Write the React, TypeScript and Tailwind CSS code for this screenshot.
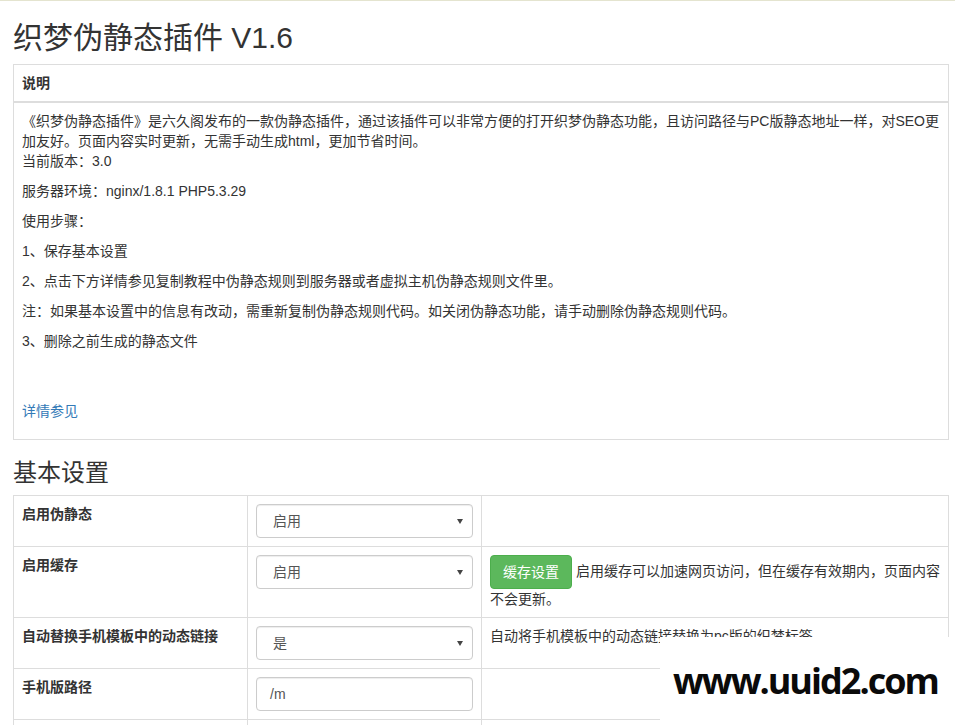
const pageFont = "[font-family:'Liberation_Sans','Noto_Sans_CJK_SC',sans-serif]";

function FakeSelect({ value }: { value: string }) {
  return (
    <div className="flex h-[34px] items-center justify-between rounded-[4px] border border-[#ccc] bg-white pl-[16px] pr-[9px] text-[14px] text-[#555] shadow-[inset_0_1px_1px_rgba(0,0,0,0.075)]">
      <span>{value}</span>
      <svg width="6" height="5" viewBox="0 0 6 5">
        <path d="M0 0h6L3 5z" fill="#444" />
      </svg>
    </div>
  );
}

function TextInput({ value }: { value: string }) {
  return (
    <div className="flex h-[34px] items-center rounded-[4px] border border-[#ccc] bg-white pl-[13px] text-[14px] text-[#555] shadow-[inset_0_1px_1px_rgba(0,0,0,0.075)]">
      {value}
    </div>
  );
}

const cell = "border border-[#ddd] p-[8px] align-top leading-[20px]";

export default function App() {
  return (
    <div className={`relative h-[725px] overflow-hidden bg-white text-[14px] text-[#333] ${pageFont}`}>
      <div className="h-px bg-[#e4e4cf]" />
      <div className="pl-[13px] pr-[6px]">
        <h2 className="mt-[20px] mb-[10px] text-[30px] leading-[33px] font-normal">织梦伪静态插件 V1.6</h2>

        <table className="w-full table-fixed border-collapse border border-[#ddd]">
          <thead>
            <tr>
              <th className="border border-b-2 border-[#ddd] p-[8px] text-left leading-[20px] font-bold">说明</th>
            </tr>
          </thead>
          <tbody>
            <tr>
              <td className={cell}>
                <p className="mb-[10px]">
                  《织梦伪静态插件》是六久阁发布的一款伪静态插件，通过该插件可以非常方便的打开织梦伪静态功能，且访问路径与PC版静态地址一样，对SEO更
                  <br />
                  加友好。页面内容实时更新，无需手动生成html，更加节省时间。
                  <br />
                  当前版本：3.0
                </p>
                <p className="mb-[10px]">服务器环境：nginx/1.8.1 PHP5.3.29</p>
                <p className="mb-[10px]">使用步骤：</p>
                <p className="mb-[10px]">1、保存基本设置</p>
                <p className="mb-[10px]">2、点击下方详情参见复制教程中伪静态规则到服务器或者虚拟主机伪静态规则文件里。</p>
                <p className="mb-[10px]">注：如果基本设置中的信息有改动，需重新复制伪静态规则代码。如关闭伪静态功能，请手动删除伪静态规则代码。</p>
                <p className="mb-[10px]">3、删除之前生成的静态文件</p>
                <div className="h-[40px]" />
                <p className="mb-[10px]">
                  <a href="#" className="text-[#337ab7]">详情参见</a>
                </p>
              </td>
            </tr>
          </tbody>
        </table>

        <h3 className="mt-[20px] mb-[9px] text-[24px] leading-[26px] font-normal">基本设置</h3>

        <table className="w-full table-fixed border-collapse border border-[#ddd]">
          <colgroup>
            <col className="w-[234px]" />
            <col className="w-[234px]" />
            <col />
          </colgroup>
          <tbody>
            <tr>
              <td className={`${cell} font-bold`}>启用伪静态</td>
              <td className={cell}>
                <FakeSelect value="启用" />
              </td>
              <td className={cell}></td>
            </tr>
            <tr>
              <td className={`${cell} font-bold`}>启用缓存</td>
              <td className={cell}>
                <FakeSelect value="启用" />
              </td>
              <td className={cell}>
                <button className="inline-block h-[34px] rounded-[4px] border border-[#4cae4c] bg-[#5cb85c] px-[12px] align-middle text-[14px] leading-[20px] text-white">
                  缓存设置
                </button>{" "}
                启用缓存可以加速网页访问，但在缓存有效期内，页面内容
                <br />
                不会更新。
              </td>
            </tr>
            <tr>
              <td className={`${cell} font-bold`}>自动替换手机模板中的动态链接</td>
              <td className={cell}>
                <FakeSelect value="是" />
              </td>
              <td className={cell}>自动将手机模板中的动态链接替换为pc版的织梦标签</td>
            </tr>
            <tr>
              <td className={`${cell} font-bold`}>手机版路径</td>
              <td className={cell}>
                <TextInput value="/m" />
              </td>
              <td className={cell}></td>
            </tr>
            <tr>
              <td className={`${cell} h-[51px]`}></td>
              <td className={cell}></td>
              <td className={cell}></td>
            </tr>
          </tbody>
        </table>
      </div>

      <div className="absolute left-[660px] top-[637px] h-[88px] w-[295px] bg-white pl-[13px] pt-[26px]">
        <span className="text-[36px] leading-none font-bold tracking-[-2px] text-[#0a0a0a] [font-family:'Open_Sans',sans-serif]">
          www.uuid2.com
        </span>
      </div>
    </div>
  );
}
